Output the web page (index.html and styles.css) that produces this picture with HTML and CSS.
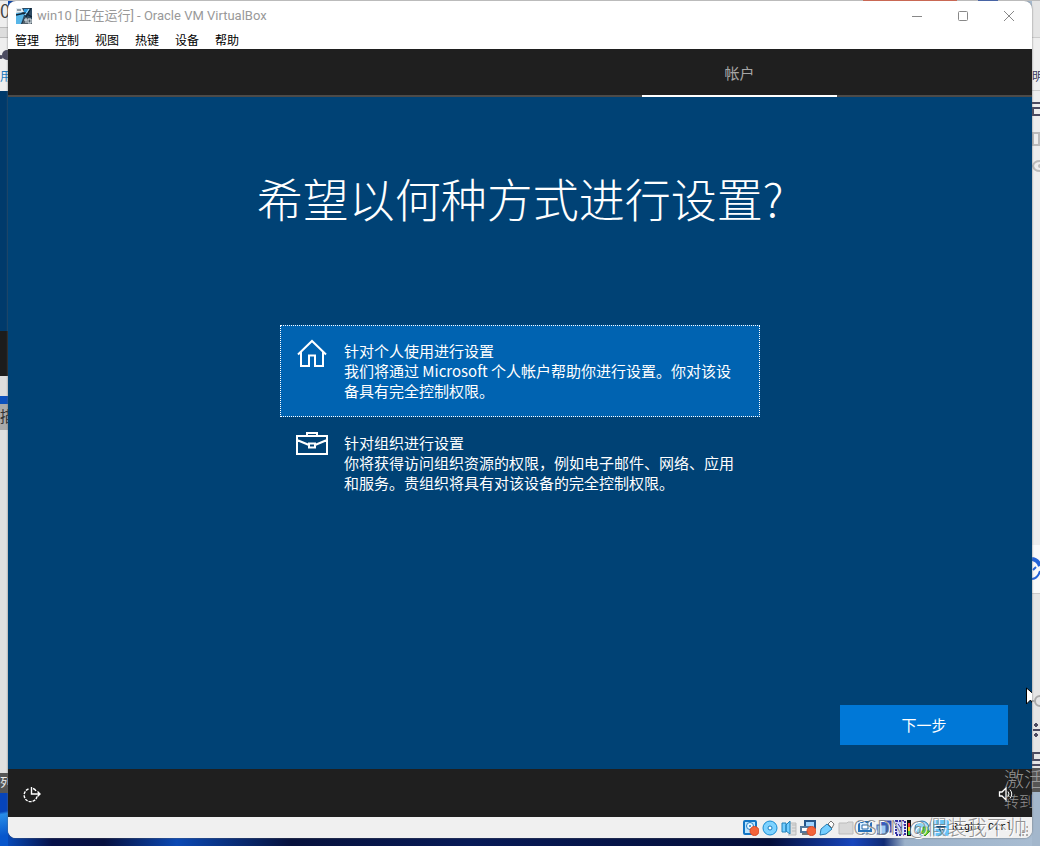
FILE: index.html
```html
<!DOCTYPE html>
<html lang="zh-CN">
<head>
<meta charset="utf-8">
<title>win10 [正在运行] - Oracle VM VirtualBox</title>
<link rel="stylesheet" href="styles.css">
</head>
<body>
<div class="desktop">
  <aside class="behind behind-left" aria-hidden="true">
    <div class="l-top">0</div>
    <div class="l-tabs"></div>
    <div class="l-page"><svg width="8" height="14"><circle cx="7" cy="7" r="5" fill="#4b4b60"/><circle cx="1" cy="9" r="2" fill="#4b4b60"/></svg><span>用</span></div>
    <div class="l-blue"></div>
    <div class="l-dark"></div>
    <div class="l-gap"></div>
    <div class="l-line"></div>
    <div class="l-label">描</div>
    <div class="l-blank"></div>
    <div class="l-col">列</div>
    <div class="l-wall"></div>
  </aside>

  <div class="window">
    <header class="titlebar">
      <svg class="app-icon" viewBox="0 0 16 16" width="16" height="16"><rect width="16" height="16" fill="#2d4b63"/><path d="M0 5 5 4 8 7 5 16H0z" fill="#58b6e8"/><path d="M8 1h6l-3 6-3 0z" fill="#2a98df"/><path d="M0 0h6l2 4-8 1z" fill="#e4edf2"/><path d="M1 2h4" stroke="#345"/><path d="M15 0 11 7 6 16M0 7l9-2 7 4" fill="none" stroke="#102537" stroke-width="1.4"/><path d="M9 9l7 2v5H6z" fill="#53616b"/><path d="M8 12h3M10 10v5M12 11h3v4h-3z" stroke="#dce6ec" fill="none"/><path d="M13 1 9 7" stroke="#b6e6ff"/></svg>
      <h1 class="window-title">win10 [正在运行] - Oracle VM VirtualBox</h1>
      <div class="window-controls">
        <button type="button" aria-label="最小化"><svg width="12" height="12"><path d="M1 6.500h10" stroke="#888"/></svg></button>
        <button type="button" aria-label="最大化"><svg width="12" height="12"><rect x="1.500" y="1.500" width="9" height="9" rx="1" fill="none" stroke="#888"/></svg></button>
        <button type="button" aria-label="关闭"><svg width="12" height="12"><path d="M1 1l10 10M11 1 1 11" stroke="#888"/></svg></button>
      </div>
    </header>
    <nav class="menubar">
      <button type="button">管理</button><button type="button">控制</button><button type="button">视图</button><button type="button">热键</button><button type="button">设备</button><button type="button">帮助</button>
    </nav>
    <div class="steps"><div class="step">帐户</div></div>
    <main class="setup">
      <h2 class="question">希望以何种方式进行设置?</h2>
      <div class="choices">
        <button type="button" class="choice selected">
          <svg class="choice-icon" width="32" height="32" viewBox="0 0 32 32"><path d="M2 16.500 16 3l14 13.500M5 14v14h8V17.500h6V28h8V14" fill="none" stroke="#fff" stroke-width="2"/></svg>
          <span class="choice-text"><span>针对个人使用进行设置</span><span>我们将通过 Microsoft 个人帐户帮助你进行设置。你对该设备具有完全控制权限。</span></span>
        </button>
        <button type="button" class="choice">
          <svg class="choice-icon" width="32" height="32" viewBox="0 0 32 32"><path d="M1 6h30v18H1zM11 6V3h10v3M1 10l12 5M31 10l-12 5M13 13.500h6v4h-6z" fill="none" stroke="#fff" stroke-width="2"/></svg>
          <span class="choice-text"><span>针对组织进行设置</span><span>你将获得访问组织资源的权限，例如电子邮件、网络、应用和服务。贵组织将具有对该设备的完全控制权限。</span></span>
        </button>
      </div>
      <div class="actions"><button type="button" class="next">下一步</button></div>
    </main>
    <div class="guest-bar">
      <button type="button" aria-label="轻松使用"><svg width="18" height="18" viewBox="0 0 18 18"><path d="M5.500 4A6.500 6.500 0 1 0 14 11.500" fill="none" stroke="#fff" stroke-width="1.400" stroke-dasharray="3 1"/><path d="M10 3.500q2 .5 3 2.500" fill="none" stroke="#fff" stroke-width="1.400"/><path d="M8.500 2v7H17M14.500 6.500 17 9l-2.500 2.500" fill="none" stroke="#fff" stroke-width="1.400"/></svg></button>
      <button type="button" aria-label="音量"><svg width="16" height="16" viewBox="0 0 16 16"><path d="M1.500 6v4H4l4 4V2L4 6z" fill="none" stroke="#fff" stroke-width="1.300"/><path d="M10 5.500q2 2.500 0 5M12 3.500q3.500 4.500 0 9" fill="none" stroke="#fff"/></svg></button>
    </div>
    <footer class="statusbar">
      <svg width="16" height="16"><rect x="1" y="1" width="12" height="13" rx="1" fill="#b9e4ff" stroke="#1275c4" stroke-width="2"/><circle cx="7" cy="6" r="3.500" fill="#e8f7ff" stroke="#2380c8"/><circle cx="7" cy="6" r="1" fill="#2380c8"/><circle cx="11.500" cy="11" r="4.500" fill="#f4643a" stroke="#d84a26"/></svg>
      <svg width="16" height="16"><circle cx="8" cy="8" r="7" fill="#7dd2ff" stroke="#168bd2"/><circle cx="8" cy="8" r="2" fill="#fff" stroke="#187cc0"/></svg>
      <svg width="16" height="16"><path d="M8 3h7v12H7M11 5h4M11 8h4M11 11h4" fill="#ddd" stroke="#bbb"/><path d="M1 3h4v9H1zM5 5l4-4v13l-4-3z" fill="#72cdff" stroke="#2380b8"/></svg>
      <svg width="16" height="16"><rect x="5" y="1" width="10" height="7" fill="#9fd3ff" stroke="#25558a" stroke-width="2"/><rect x="1" y="7" width="9" height="5" fill="#fff" stroke="#53779c" stroke-width="2"/><path d="M2 14h7" stroke="#777" stroke-width="2"/><circle cx="11.500" cy="11" r="4.500" fill="#f4643a" stroke="#d84a26"/></svg>
      <svg width="16" height="16"><path d="M1 15 2 9l6-5 5 5-6 5z" fill="#75ceff" stroke="#267db4"/><path d="M9 4l3-3 3 3-2 4z" fill="#fff" stroke="#777"/></svg>
      <svg width="16" height="16"><path d="M1 14V3h8l1-1h5v12z" fill="#d8d8d8" stroke="#bcbcbc"/></svg>
      <svg width="16" height="16"><rect x="2" y="2" width="12" height="9" fill="#d6edff" stroke="#2772ba" stroke-width="2"/><path d="M5 14h7M5 5h6v4H5z" fill="#fff" stroke="#2464a6"/></svg>
      <svg width="16" height="16"><rect x="5" y="1" width="10" height="11" fill="#375ec3" stroke="#263b9a"/><rect x="1" y="5" width="9" height="9" fill="#9dcaf2" stroke="#4060ab"/></svg>
      <svg width="16" height="16"><rect x="1" y="1" width="9" height="14" fill="#cbd2ff" stroke="#302fa0" stroke-width="2" stroke-dasharray="2 1"/><path d="M3 4l3 4 3-4M6 8v4" stroke="#302fa0" fill="none"/><rect x="12" y="0" width="4" height="16" fill="#111"/><path d="M13 3h2v4h-2z" fill="#e33"/><path d="M13 7h2v4h-2z" fill="#eedb18"/><path d="M13 11h2v4h-2z" fill="#3bc83b"/></svg>
      <svg width="16" height="16"><circle cx="8" cy="8" r="7" fill="#8dd3f3" stroke="#2779b3"/><path d="M9 7v4H6l5 5 5-5h-3V7z" fill="#62d637" stroke="#3d9a27"/></svg>
      <svg width="16" height="16"><rect width="16" height="16" rx="2" fill="#68c3f6"/><path d="M3 6h10l-5 6z" fill="#164c7b"/></svg>
      <span class="host-key">Right Ctrl</span>
      <svg class="grip" width="10" height="10"><path d="M8 0v2M8 4v2M4 4v2M8 8v2M4 8v2M1 8v2" stroke="#aaa" stroke-width="2"/></svg>
    </footer>
  </div>

  <aside class="behind behind-right" aria-hidden="true">
    <div class="r-top"></div>
    <div class="r-word">明</div>
    <div class="r-tools"><svg width="8" height="18"><path d="M0 2h8M8 7H1v7h7" stroke="#4b4b60" stroke-width="2" fill="none"/></svg><svg width="8" height="14"><path d="M1 1h6v12H1z" fill="none" stroke="#bbb" stroke-width="2"/></svg><svg width="8" height="14"><path d="M8 2Q2 2 1 7q1 5 7 5" fill="none" stroke="#bbb" stroke-width="2"/><circle cx="8" cy="7" r="2" fill="#bbb"/></svg></div>
    <div class="r-card"><svg width="8" height="24"><path d="M0 2q6 1 8 7" fill="none" stroke="#2464d8" stroke-width="4"/><path d="M0 22q6-1 8-8M1 13l3-3" fill="none" stroke="#2464d8" stroke-width="2"/></svg></div>
    <div class="r-side"><svg width="8" height="16"><circle cx="8" cy="8" r="5" fill="none" stroke="#aaa" stroke-width="2"/><path d="M0 8h4" stroke="#aaa" stroke-width="2"/></svg><svg width="8" height="16"><path d="M4 1v4M4 11v4M1 8h7M2 3h4M2 13h4" stroke="#4b4b60" stroke-width="2"/></svg><svg width="8" height="16"><path d="M8 2H1v7h7M0 14h8" stroke="#4b4b60" stroke-width="2" fill="none"/></svg></div>
    <div class="r-dark"></div>
    <div class="r-wall"></div>
  </aside>
  <div class="top-strip" aria-hidden="true"></div>
  <svg class="pointer" width="6" height="20" aria-hidden="true"><path d="M.5 1v16l4-4 3 5V7z" fill="#fff" stroke="#000"/></svg>
  <div class="activation" aria-hidden="true"><div>激活</div><p>转到</p></div>
  <div class="watermark" aria-hidden="true">CSDN @假装我不帅</div>
</div>
</body>
</html>
```
FILE: styles.css
```css
* { box-sizing: border-box; }
body { margin: 0; font-family: "Noto Sans CJK SC", sans-serif; }
button { font: inherit; color: inherit; border: 0; padding: 0; background: none; }
svg { display: block; flex: none; }
.desktop { position: relative; display: grid; grid-template-columns: 8px minmax(0, 1fr) 8px; min-height: 100vh; overflow: hidden; background: linear-gradient(90deg, #0753ca 0, #061149 5%, #06103f 10%, #0b49b4 17%, #06113c 28%, #071a57 45%, #030d38 74%, #1746bd 82%, #102b75 85%, #9cb2ca 87%, #a9bdd2 100%); }
.behind { display: flex; flex-direction: column; overflow: hidden; white-space: nowrap; background: #e5e5e5; }
.l-top { height: 27px; font-size: 18px; line-height: 20px; color: #444; background: #eee; }
.l-tabs { height: 11px; background: #ddd; border-top: 1px solid #bbb; border-bottom: 1px solid #bbb; }
.l-page { height: 53px; padding-top: 10px; background: #eee; }
.l-page span { display: block; font-size: 12px; line-height: 28px; color: #1977bd; }
.l-blue { height: 240px; background: #003a6b; }
.l-dark { height: 45px; background: #1c1c1c; }
.l-gap { height: 20px; background: #ddd; }
.l-line { height: 8px; background: #0b50bd; }
.l-label { height: 26px; font-size: 15px; line-height: 24px; color: #333; background: #aaa; }
.l-blank { height: 343px; background: #e0e0e0; }
.l-col { height: 20px; font-size: 12px; line-height: 18px; color: #eee; background: #555; }
.l-wall { flex: 1; background: linear-gradient(170deg, #0644bb 35%, #278de8 40%, #0756cc 80%); }
.window { display: flex; flex-direction: column; margin: 1px 0 8px; border-radius: 8px; overflow: hidden; background: #fff; box-shadow: 0 0 2px #666; z-index: 1; }
.titlebar { display: flex; align-items: center; height: 29px; padding: 0 0 0 8px; }
.window-title { flex: 1; margin: 0 0 0 5px; font: 400 13px/20px Roboto, "Noto Sans CJK SC", sans-serif; color: #999; }
.window-controls { display: flex; }
.window-controls button { display: grid; place-items: center; width: 46px; height: 28px; }
.menubar { display: flex; gap: 16px; height: 19px; padding: 0 7px; font-size: 12px; line-height: 20px; color: #000; }
.steps { display: grid; grid-template-columns: 634px 195px; height: 48px; background: #1f1f1f; border-bottom: 2px solid #4c4a48; }
.step { grid-column: 2; height: 48px; font-size: 15px; line-height: 48px; text-align: center; color: #a6a6a6; border-bottom: 2px solid #fff; }
.setup { flex: 1; display: flex; flex-direction: column; color: #fff; background: #004275; }
.question { margin: 60px 0 0; font-size: 46px; font-weight: 300; line-height: 80px; text-align: center; }
.choices { width: 480px; max-width: 100%; margin: 88px auto 0; }
.choice { display: flex; align-items: flex-start; gap: 16px; width: 100%; min-height: 92px; padding: 12px 16px 12px 15px; text-align: left; font-size: 15px; line-height: 20px; border: 1px solid transparent; }
.choice.selected { background: #0063b1; border: 1px dotted #fff; }
.choice-text { flex: 1; padding-top: 3px; }
.choice-text span { display: block; }
.actions { display: flex; justify-content: flex-end; margin-top: auto; padding: 24px; }
.next { width: 168px; height: 40px; padding-bottom: 2px; font-size: 15px; background: #0078d7; }
.guest-bar { display: flex; align-items: center; justify-content: space-between; height: 48px; padding: 2px 18px 0 15px; background: #1f1f1f; }
.statusbar { display: flex; align-items: center; justify-content: flex-end; gap: 3px; height: 21px; padding-right: 3px; background: #f0f0f0; }
.host-key { font: 10px "Liberation Mono", monospace; color: #000; }
.grip { align-self: flex-end; margin: 0 0 2px 4px; }
.behind-right { background: #eee; }
.r-top { height: 38px; background: #e5e5e5; border-bottom: 1px solid #ccc; }
.r-word { height: 53px; padding-top: 28px; font-size: 12px; line-height: 20px; color: #35355a; border-bottom: 1px solid #ccc; }
.r-tools { display: flex; flex-direction: column; gap: 13px; height: 454px; padding-top: 10px; }
.r-card { height: 49px; padding-top: 12px; background: #fafafa; border-bottom: 1px solid #ccc; }
.r-side { display: flex; flex-direction: column; gap: 13px; height: 174px; padding-top: 99px; background: #e5e5e5; }
.r-dark { height: 24px; background: #555; }
.r-wall { flex: 1; background: #a3b7cc; }
.top-strip { position: absolute; inset: 0 0 auto; height: 1px; background: linear-gradient(90deg, #bbb 83%, #c96854 83%, #c96854 92%, #bbb 92%, #bbb 94%, #4864a4 94%, #4864a4 96%, #bbb 96%); z-index: 2; }
.pointer { position: absolute; right: 8px; top: 687px; z-index: 3; }
.activation { position: absolute; right: 0; bottom: 35px; width: 36px; overflow: hidden; white-space: nowrap; font-size: 20px; font-weight: 300; line-height: 24px; color: rgba(175, 175, 175, .8); z-index: 3; }
.activation p { margin: 0; font-size: 15px; line-height: 20px; }
.watermark { position: absolute; right: 13px; bottom: 5px; font-size: 20px; font-weight: 300; line-height: 28px; color: rgba(120, 120, 120, .8); text-shadow: 1px 1px #fff; z-index: 3; }
```
